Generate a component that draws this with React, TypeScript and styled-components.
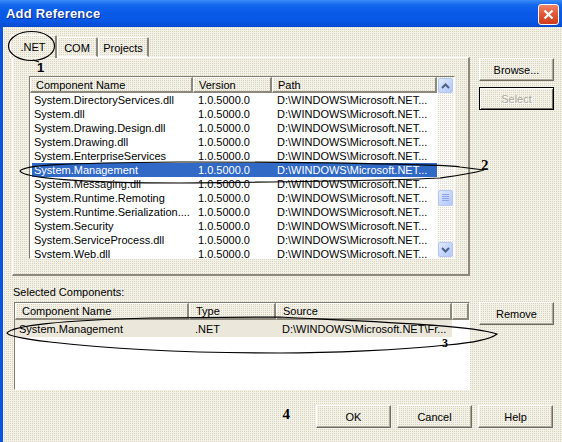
import React from 'react';
import styled, { createGlobalStyle } from 'styled-components';

const GlobalStyle = createGlobalStyle`
  html, body {
    margin: 0;
    padding: 0;
    background: #ffffff;
  }
  body {
    font-family: "Liberation Sans", Arial, sans-serif;
    font-size: 11px;
    color: #000000;
  }
`;

const dither = `
  background-color: #f3f1e8;
  background-image: conic-gradient(from 0deg at 1px 1px, #d8d3bd 0 25%, transparent 0);
  background-size: 2px 2px;
`;

const Window = styled.div`
  position: relative;
  width: 562px;
  height: 442px;
  overflow: hidden;
  display: flex;
  flex-direction: column;
  background: #0a55e0;
`;

const TitleBar = styled.div`
  height: 27px;
  flex: none;
  display: flex;
  align-items: center;
  justify-content: space-between;
  padding: 0 3px 0 6px;
  background: linear-gradient(180deg, #3b8cf7 0%, #1468ee 18%, #0a5ae8 45%, #0856e4 80%, #044bd0 100%);
`;

const Title = styled.span`
  color: #ffffff;
  font-family: "Liberation Sans", Arial, sans-serif;
  font-weight: bold;
  font-size: 13px;
  letter-spacing: 0.2px;
  text-shadow: 1px 1px 0 #0a2a8a;
`;

const CloseButton = styled.div`
  width: 19px;
  height: 19px;
  margin-top: 2px;
  border: 1px solid #ffffff;
  border-radius: 3px;
  background: linear-gradient(180deg, #f0866a 0%, #e35a39 45%, #cf3c1c 100%);
  display: flex;
  align-items: center;
  justify-content: center;
`;

const Body = styled.div`
  flex: 1;
  margin-left: 3px;
  padding: 8px 0 0 7px;
  display: flex;
  flex-direction: column;
  ${dither}
`;

const TopRow = styled.div`
  display: flex;
  align-items: flex-start;
`;

const TabBlock = styled.div`
  width: 460px;
  display: flex;
  flex-direction: column;
`;

const TabStrip = styled.div`
  height: 22px;
  display: flex;
  align-items: flex-end;
  position: relative;
  z-index: 2;
`;

const Tab = styled.div<{ $active?: boolean; $w: number }>`
  width: ${(p) => p.$w}px;
  height: ${(p) => (p.$active ? 23 : 20)}px;
  box-sizing: border-box;
  display: flex;
  align-items: center;
  justify-content: center;
  padding-top: ${(p) => (p.$active ? 0 : 1)}px;
  border-top: 1px solid #ffffff;
  border-left: 1px solid #ffffff;
  border-right: 2px solid #8c897c;
  border-bottom: ${(p) => (p.$active ? 'none' : '1px solid #ffffff')};
  border-radius: 2px 2px 0 0;
  margin-bottom: ${(p) => (p.$active ? -1 : 0)}px;
  ${dither}
`;

const Panel = styled.div`
  margin-left: 2px;
  width: 458px;
  height: 219px;
  box-sizing: border-box;
  padding: 18px 0 0 16px;
  border-top: 1px solid #ffffff;
  border-left: 1px solid #ffffff;
  border-right: 2px solid #8c897c;
  border-bottom: 2px solid #8c897c;
`;

const SideColumn = styled.div<{ $top: number }>`
  margin-left: 9px;
  margin-top: ${(p) => p.$top}px;
  display: flex;
  flex-direction: column;
  gap: 6px;
`;

const Button = styled.div<{ $default?: boolean; $disabled?: boolean }>`
  width: 75px;
  height: 23px;
  box-sizing: border-box;
  display: flex;
  align-items: center;
  justify-content: center;
  font-size: 11px;
  color: ${(p) => (p.$disabled ? '#aca899' : '#000000')};
  text-shadow: ${(p) => (p.$disabled ? '1px 1px 0 #ffffff' : 'none')};
  border: 1px solid;
  border-color: ${(p) => (p.$default ? '#000000' : '#ffffff #6f6c61 #6f6c61 #ffffff')};
  box-shadow: ${(p) =>
    p.$default
      ? 'inset 1px 1px 0 #ffffff, inset -1px -1px 0 #6f6c61'
      : 'inset -1px -1px 0 #aca899'};
  ${dither}
`;

const ListBox = styled.div<{ $w: number; $h: number }>`
  width: ${(p) => p.$w}px;
  height: ${(p) => p.$h}px;
  box-sizing: border-box;
  border: 1px solid;
  border-color: #7f7d72 #ffffff #ffffff #7f7d72;
  background: #ffffff;
  display: flex;
  overflow: hidden;
`;

const ListMain = styled.div`
  flex: 1;
  display: flex;
  flex-direction: column;
  overflow: hidden;
`;

const HeaderRow = styled.div<{ $h: number }>`
  height: ${(p) => p.$h}px;
  flex: none;
  display: flex;
`;

const HeaderCell = styled.div<{ $w: number; $pad?: number }>`
  width: ${(p) => p.$w}px;
  flex: none;
  box-sizing: border-box;
  padding-left: ${(p) => p.$pad ?? 5}px;
  display: flex;
  align-items: center;
  white-space: nowrap;
  overflow: hidden;
  border-top: 1px solid #ffffff;
  border-left: 1px solid #ffffff;
  border-right: 2px solid #8c897c;
  border-bottom: 2px solid #8c897c;
  ${dither}
`;

const Row = styled.div<{ $h: number; $selected?: boolean; $inactive?: boolean }>`
  height: ${(p) => p.$h}px;
  flex: none;
  display: flex;
  align-self: flex-start;
  color: ${(p) => (p.$selected ? '#ffffff' : '#000000')};
  background: ${(p) => (p.$selected ? '#3169c6' : p.$inactive ? '#ebe8db' : 'transparent')};
`;

const Cell = styled.div<{ $w: number; $pad?: number }>`
  width: ${(p) => p.$w}px;
  flex: none;
  box-sizing: border-box;
  padding-left: ${(p) => p.$pad ?? 5}px;
  display: flex;
  align-items: center;
  white-space: nowrap;
  overflow: hidden;
`;

const ScrollBar = styled.div`
  width: 17px;
  flex: none;
  display: flex;
  flex-direction: column;
  align-items: center;
  background-color: #fbfaf6;
  background-image: conic-gradient(from 0deg at 1px 1px, #dcdacf 0 25%, transparent 0);
  background-size: 2px 2px;
`;

const ScrollButton = styled.div`
  width: 15px;
  height: 15px;
  margin: 1px 0;
  box-sizing: border-box;
  border: 1px solid #b5c8f3;
  border-radius: 2px;
  background: linear-gradient(135deg, #e1eafe 0%, #c5d6fc 55%, #b3c8f8 100%);
  display: flex;
  align-items: center;
  justify-content: center;
  flex: none;
`;

const ScrollTrack = styled.div`
  flex: 1;
  display: flex;
  flex-direction: column;
  align-items: center;
`;

const Thumb = styled(ScrollButton)<{ $top: number }>`
  height: 16px;
  margin-top: ${(p) => p.$top}px;
`;

const SectionLabel = styled.div`
  margin-top: 9px;
  height: 14px;
  line-height: 14px;
  padding-left: 3px;
`;

const BottomListRow = styled.div`
  margin-top: 3px;
  display: flex;
  align-items: flex-start;
  padding-left: 4px;
`;

const ButtonRow = styled.div`
  margin-top: 15px;
  display: flex;
  align-items: flex-start;
  justify-content: flex-end;
  gap: 6px;
  padding-right: 9px;
`;

const StepNumber = styled.span`
  font-family: "Liberation Serif", "Times New Roman", serif;
  font-weight: bold;
  font-size: 15px;
  line-height: 15px;
  margin-top: 2px;
  margin-right: 20px;
`;

const Overlay = styled.svg`
  position: absolute;
  left: 0;
  top: 0;
  pointer-events: none;
  z-index: 5;
`;

const Marker = styled.span<{ $x: number; $y: number; $serif?: boolean; $size: number }>`
  position: absolute;
  left: ${(p) => p.$x}px;
  top: ${(p) => p.$y}px;
  z-index: 6;
  font-family: ${(p) =>
    p.$serif ? '"Liberation Serif", "Times New Roman", serif' : '"Liberation Sans", Arial, sans-serif'};
  font-weight: bold;
  font-size: ${(p) => p.$size}px;
  line-height: 1;
  color: #000000;
`;

const assemblies = [
  'System.DirectoryServices.dll',
  'System.dll',
  'System.Drawing.Design.dll',
  'System.Drawing.dll',
  'System.EnterpriseServices',
  'System.Management',
  'System.Messaging.dll',
  'System.Runtime.Remoting',
  'System.Runtime.Serialization....',
  'System.Security',
  'System.ServiceProcess.dll',
  'System.Web.dll',
];

const Chevron = ({ up }: { up?: boolean }) => (
  <svg width="9" height="6" viewBox="0 0 9 6">
    <path
      d={up ? 'M1 5 L4.5 1.5 L8 5' : 'M1 1 L4.5 4.5 L8 1'}
      fill="none"
      stroke="#4d6185"
      strokeWidth="2"
    />
  </svg>
);

const Grip = () => (
  <svg width="7" height="8" viewBox="0 0 7 8">
    {[0, 2, 4, 6].map((y) => (
      <line key={y} x1="0" y1={y + 0.5} x2="7" y2={y + 0.5} stroke="#8aa6e8" strokeWidth="1" />
    ))}
  </svg>
);

export default function App(): React.JSX.Element {
  return (
    <>
      <GlobalStyle />
      <Window>
        <TitleBar>
          <Title>Add Reference</Title>
          <CloseButton>
            <svg width="11" height="11" viewBox="0 0 11 11">
              <path d="M1.5 1.5 L9.5 9.5 M9.5 1.5 L1.5 9.5" stroke="#ffffff" strokeWidth="2.2" />
            </svg>
          </CloseButton>
        </TitleBar>

        <Body>
          <TopRow>
            <TabBlock>
              <TabStrip>
                <Tab $active $w={47}>.NET</Tab>
                <Tab $w={41}>COM</Tab>
                <Tab $w={51}>Projects</Tab>
              </TabStrip>
              <Panel>
                <ListBox $w={426} $h={183}>
                  <ListMain>
                    <HeaderRow $h={16}>
                      <HeaderCell $w={163}>Component Name</HeaderCell>
                      <HeaderCell $w={79}>Version</HeaderCell>
                      <HeaderCell $w={165}>Path</HeaderCell>
                    </HeaderRow>
                    {assemblies.map((name) => (
                      <Row key={name} $h={14} $selected={name === 'System.Management'} style={{ marginLeft: 2 }}>
                        <Cell $w={161} $pad={2}>{name}</Cell>
                        <Cell $w={79}>1.0.5000.0</Cell>
                        <Cell $w={165}>D:\WINDOWS\Microsoft.NET...</Cell>
                      </Row>
                    ))}
                  </ListMain>
                  <ScrollBar>
                    <ScrollButton>
                      <Chevron up />
                    </ScrollButton>
                    <ScrollTrack>
                      <Thumb $top={96}>
                        <Grip />
                      </Thumb>
                    </ScrollTrack>
                    <ScrollButton>
                      <Chevron />
                    </ScrollButton>
                  </ScrollBar>
                </ListBox>
              </Panel>
            </TabBlock>
            <SideColumn $top={23}>
              <Button>Browse...</Button>
              <Button $default $disabled>Select</Button>
            </SideColumn>
          </TopRow>

          <SectionLabel>Selected Components:</SectionLabel>

          <BottomListRow>
            <ListBox $w={456} $h={88}>
              <ListMain>
                <HeaderRow $h={17}>
                  <HeaderCell $w={174} $pad={6}>Component Name</HeaderCell>
                  <HeaderCell $w={87} $pad={6}>Type</HeaderCell>
                  <HeaderCell $w={176} $pad={6}>Source</HeaderCell>
                  <HeaderCell $w={17} />
                </HeaderRow>
                <Row $h={17} $inactive>
                  <Cell $w={174} $pad={4}>System.Management</Cell>
                  <Cell $w={87} $pad={6}>.NET</Cell>
                  <Cell $w={176} $pad={6}>D:\WINDOWS\Microsoft.NET\Fr...</Cell>
                </Row>
              </ListMain>
            </ListBox>
            <SideColumn $top={0}>
              <Button>Remove</Button>
            </SideColumn>
          </BottomListRow>

          <ButtonRow>
            <StepNumber>4</StepNumber>
            <Button>OK</Button>
            <Button>Cancel</Button>
            <Button>Help</Button>
          </ButtonRow>
        </Body>

        <Overlay width="562" height="442" viewBox="0 0 562 442">
          <g fill="none" stroke="#000000" strokeWidth="1.2">
            <ellipse cx="31.5" cy="46" rx="23" ry="14.5" />
            <path d="M33 60 L39 62" />
            <path d="M20 171 C24 165, 60 163, 180 162 C300 162, 440 164, 460 167 L484 170 C470 174, 462 175, 440 178 C380 181, 280 182, 180 183 C80 183, 24 178, 20 171 Z" />
            <path d="M7 333 C12 326, 60 320, 150 318 L280 317 C380 322, 470 325, 497 334 C490 340, 470 343, 447 345 C400 350, 330 353, 280 353 C200 353, 120 350, 50 342 C25 339, 8 336, 7 333 Z" />
          </g>
        </Overlay>
        <Marker $x={37} $y={61} $size={13}>1</Marker>
        <Marker $x={481} $y={158} $size={15} $serif>2</Marker>
        <Marker $x={442} $y={337} $size={12} $serif>3</Marker>
      </Window>
    </>
  );
}
